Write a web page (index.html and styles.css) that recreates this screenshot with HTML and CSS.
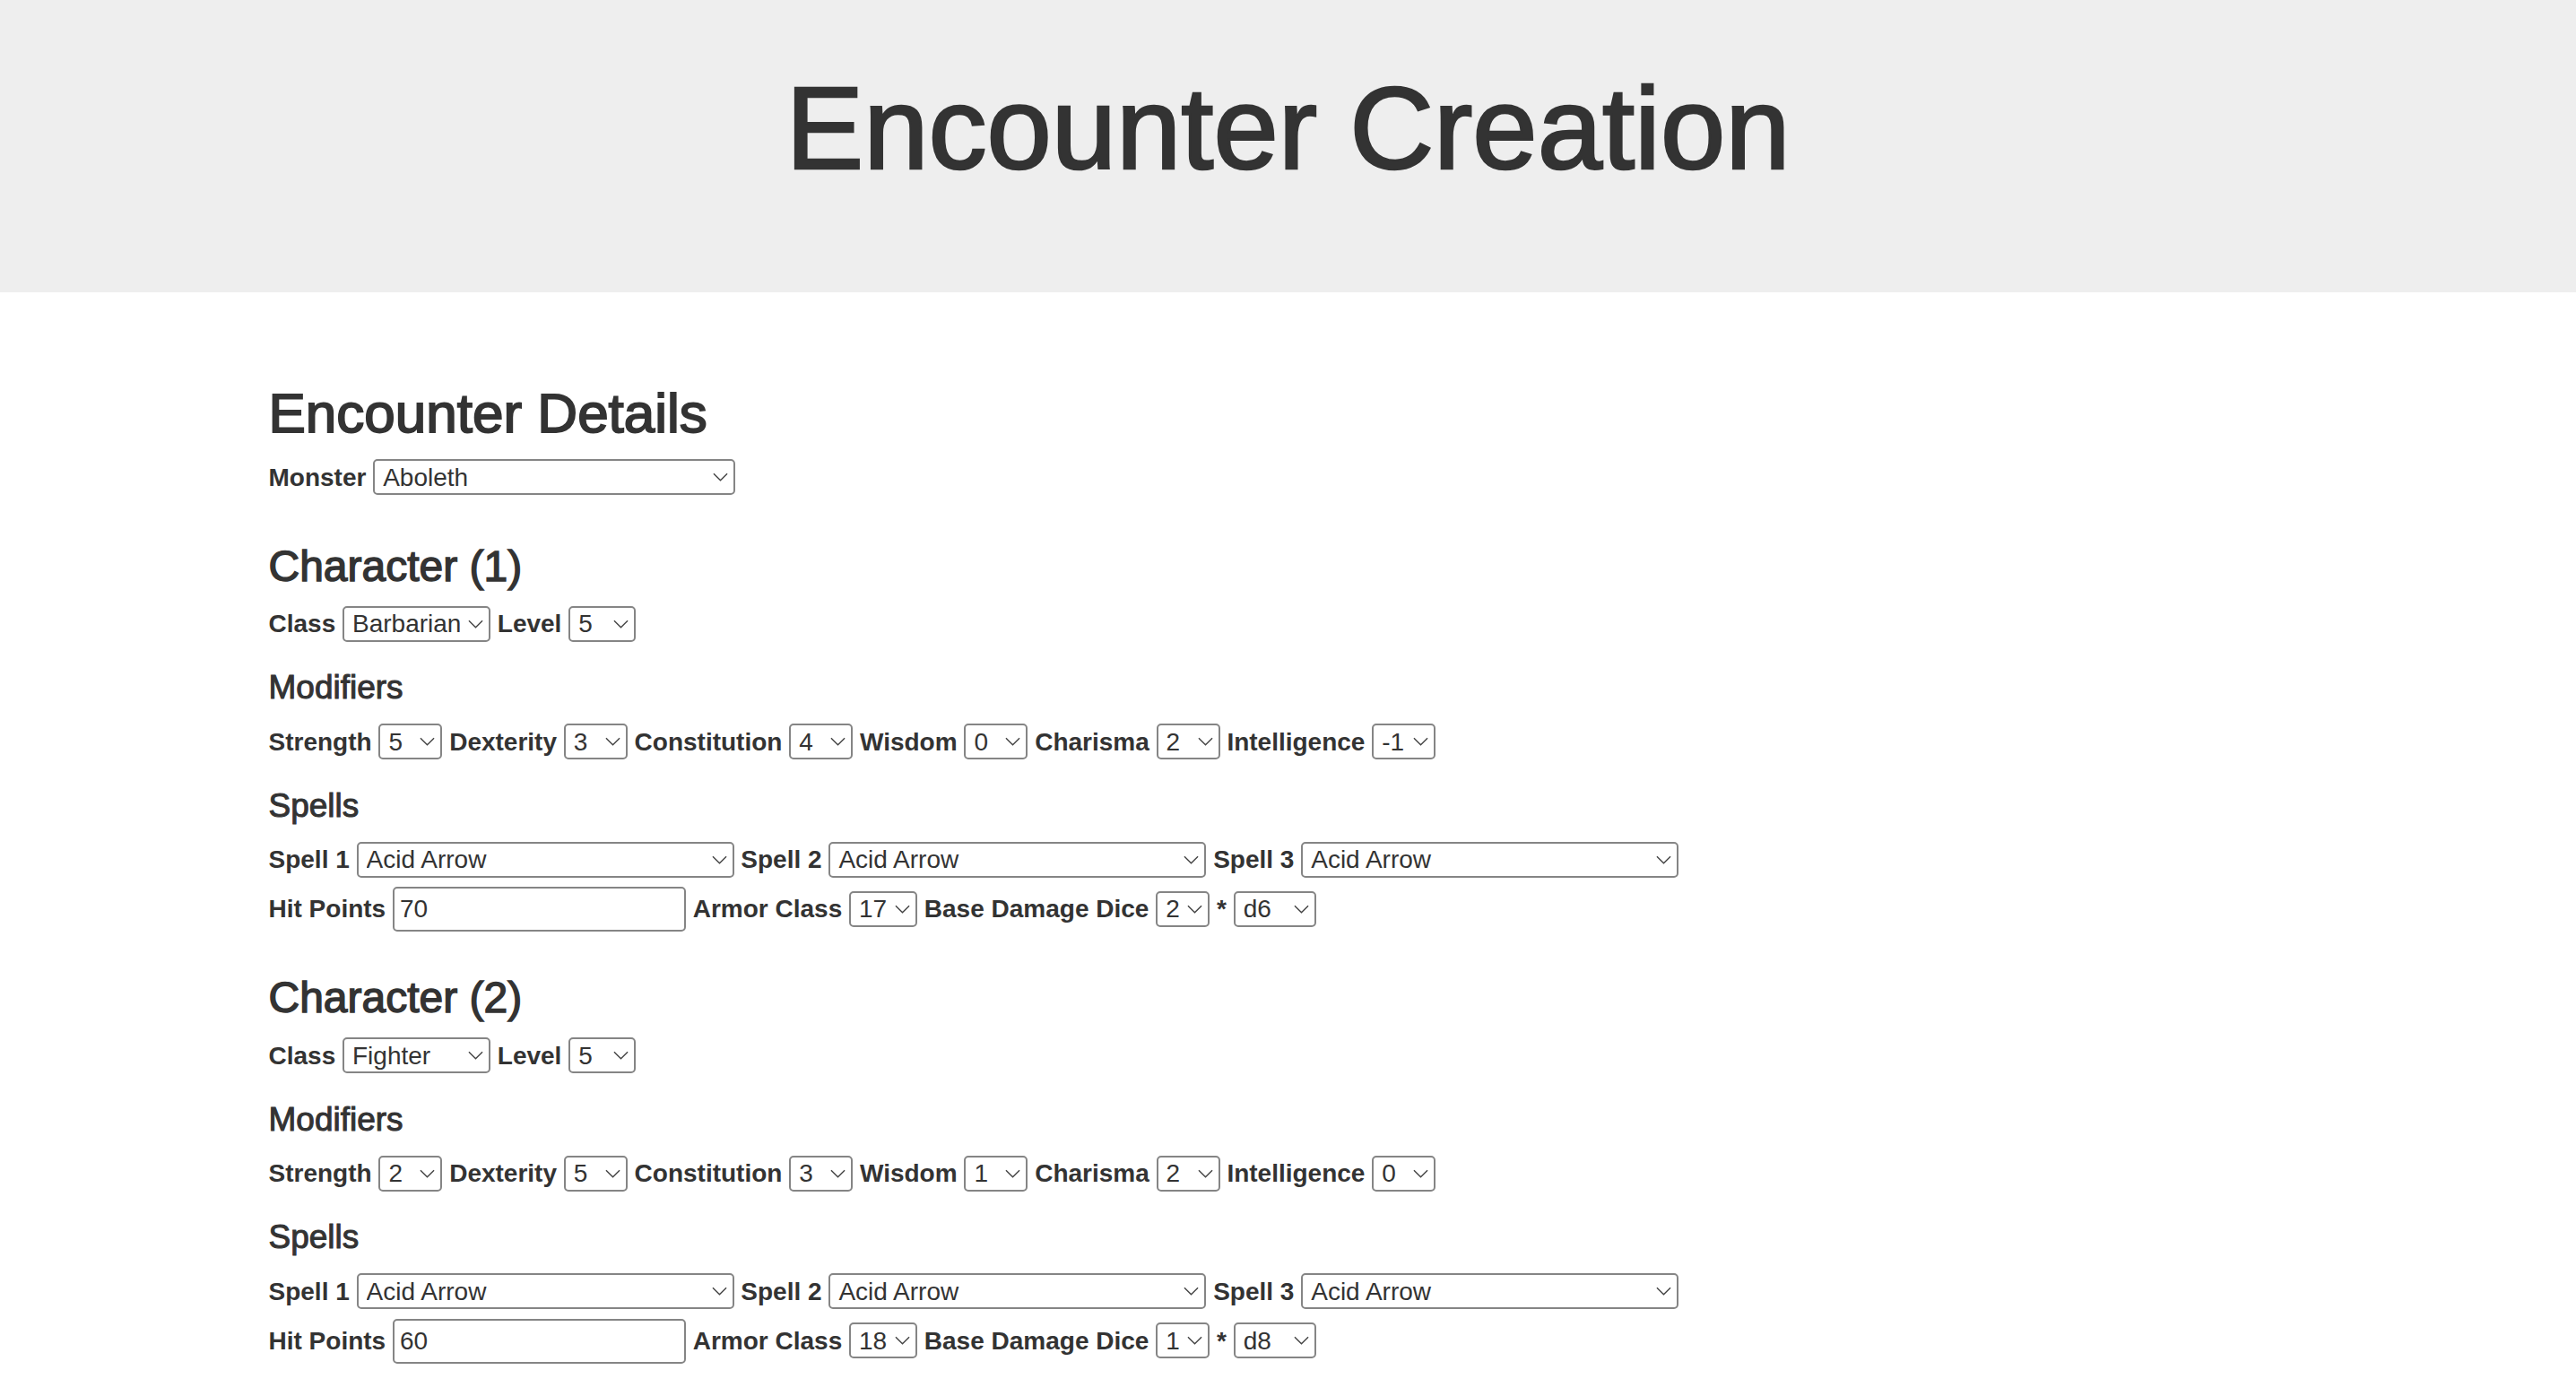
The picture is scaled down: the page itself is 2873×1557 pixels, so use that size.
FILE: index.html
```html
<!DOCTYPE html>
<html lang="en">
<head>
<meta charset="utf-8">
<title>Encounter Creation</title>
<link rel="stylesheet" href="styles.css">
</head>
<body>
<header class="jumbo">
  <h1 class="title">Encounter Creation</h1>
</header>
<main class="container">
  <section class="encounter">
    <h2 class="enc-title">Encounter Details</h2>
    <div class="row">
      <label class="lbl">Monster</label>
      <span class="sel"><select class="w-monster"><option selected>Aboleth</option><option>Adult Black Dragon</option><option>Beholder</option><option>Lich</option></select><svg class="chev" viewBox="0 0 18 10"><polyline points="1,1 9,9 17,1"/></svg></span>
    </div>
  </section>

  <section class="char">
    <h3 class="char-title">Character (1)</h3>
    <div class="row">
      <label class="lbl">Class</label>
      <span class="sel"><select class="w-class"><option selected>Barbarian</option><option>Bard</option><option>Cleric</option><option>Fighter</option><option>Wizard</option></select><svg class="chev" viewBox="0 0 18 10"><polyline points="1,1 9,9 17,1"/></svg></span>
      <label class="lbl">Level</label>
      <span class="sel"><select class="w-level"><option>1</option><option selected>5</option><option>10</option><option>20</option></select><svg class="chev" viewBox="0 0 18 10"><polyline points="1,1 9,9 17,1"/></svg></span>
    </div>
    <h4 class="sub-title">Modifiers</h4>
    <div class="row">
      <label class="lbl">Strength</label>
      <span class="sel"><select class="w-mod"><option>-1</option><option selected>5</option></select><svg class="chev" viewBox="0 0 18 10"><polyline points="1,1 9,9 17,1"/></svg></span>
      <label class="lbl">Dexterity</label>
      <span class="sel"><select class="w-mod"><option>-1</option><option selected>3</option></select><svg class="chev" viewBox="0 0 18 10"><polyline points="1,1 9,9 17,1"/></svg></span>
      <label class="lbl">Constitution</label>
      <span class="sel"><select class="w-mod"><option>-1</option><option selected>4</option></select><svg class="chev" viewBox="0 0 18 10"><polyline points="1,1 9,9 17,1"/></svg></span>
      <label class="lbl">Wisdom</label>
      <span class="sel"><select class="w-mod"><option>-1</option><option selected>0</option></select><svg class="chev" viewBox="0 0 18 10"><polyline points="1,1 9,9 17,1"/></svg></span>
      <label class="lbl">Charisma</label>
      <span class="sel"><select class="w-mod"><option>-1</option><option selected>2</option></select><svg class="chev" viewBox="0 0 18 10"><polyline points="1,1 9,9 17,1"/></svg></span>
      <label class="lbl">Intelligence</label>
      <span class="sel"><select class="w-mod"><option selected>-1</option><option>0</option></select><svg class="chev" viewBox="0 0 18 10"><polyline points="1,1 9,9 17,1"/></svg></span>
    </div>
    <h4 class="sub-title">Spells</h4>
    <div class="row">
      <label class="lbl">Spell 1</label>
      <span class="sel"><select class="w-spell"><option selected>Acid Arrow</option><option>Fireball</option></select><svg class="chev" viewBox="0 0 18 10"><polyline points="1,1 9,9 17,1"/></svg></span>
      <label class="lbl">Spell 2</label>
      <span class="sel"><select class="w-spell"><option selected>Acid Arrow</option><option>Fireball</option></select><svg class="chev" viewBox="0 0 18 10"><polyline points="1,1 9,9 17,1"/></svg></span>
      <label class="lbl">Spell 3</label>
      <span class="sel"><select class="w-spell"><option selected>Acid Arrow</option><option>Fireball</option></select><svg class="chev" viewBox="0 0 18 10"><polyline points="1,1 9,9 17,1"/></svg></span>
    </div>
    <div class="row">
      <label class="lbl">Hit Points</label>
      <input class="w-hp" type="text" value="70">
      <label class="lbl">Armor Class</label>
      <span class="sel"><select class="w-ac"><option>10</option><option selected>17</option></select><svg class="chev" viewBox="0 0 18 10"><polyline points="1,1 9,9 17,1"/></svg></span>
      <label class="lbl">Base Damage Dice</label>
      <span class="sel"><select class="w-dn"><option>1</option><option selected>2</option></select><svg class="chev" viewBox="0 0 18 10"><polyline points="1,1 9,9 17,1"/></svg></span>
      <span class="times">*</span>
      <span class="sel"><select class="w-dice"><option>d4</option><option selected>d6</option><option>d8</option><option>d12</option></select><svg class="chev" viewBox="0 0 18 10"><polyline points="1,1 9,9 17,1"/></svg></span>
    </div>
  </section>

  <section class="char">
    <h3 class="char-title">Character (2)</h3>
    <div class="row">
      <label class="lbl">Class</label>
      <span class="sel"><select class="w-class"><option>Barbarian</option><option selected>Fighter</option><option>Wizard</option></select><svg class="chev" viewBox="0 0 18 10"><polyline points="1,1 9,9 17,1"/></svg></span>
      <label class="lbl">Level</label>
      <span class="sel"><select class="w-level"><option>1</option><option selected>5</option><option>20</option></select><svg class="chev" viewBox="0 0 18 10"><polyline points="1,1 9,9 17,1"/></svg></span>
    </div>
    <h4 class="sub-title">Modifiers</h4>
    <div class="row">
      <label class="lbl">Strength</label>
      <span class="sel"><select class="w-mod"><option>-1</option><option selected>2</option></select><svg class="chev" viewBox="0 0 18 10"><polyline points="1,1 9,9 17,1"/></svg></span>
      <label class="lbl">Dexterity</label>
      <span class="sel"><select class="w-mod"><option>-1</option><option selected>5</option></select><svg class="chev" viewBox="0 0 18 10"><polyline points="1,1 9,9 17,1"/></svg></span>
      <label class="lbl">Constitution</label>
      <span class="sel"><select class="w-mod"><option>-1</option><option selected>3</option></select><svg class="chev" viewBox="0 0 18 10"><polyline points="1,1 9,9 17,1"/></svg></span>
      <label class="lbl">Wisdom</label>
      <span class="sel"><select class="w-mod"><option>-1</option><option selected>1</option></select><svg class="chev" viewBox="0 0 18 10"><polyline points="1,1 9,9 17,1"/></svg></span>
      <label class="lbl">Charisma</label>
      <span class="sel"><select class="w-mod"><option>-1</option><option selected>2</option></select><svg class="chev" viewBox="0 0 18 10"><polyline points="1,1 9,9 17,1"/></svg></span>
      <label class="lbl">Intelligence</label>
      <span class="sel"><select class="w-mod"><option>-1</option><option selected>0</option></select><svg class="chev" viewBox="0 0 18 10"><polyline points="1,1 9,9 17,1"/></svg></span>
    </div>
    <h4 class="sub-title">Spells</h4>
    <div class="row">
      <label class="lbl">Spell 1</label>
      <span class="sel"><select class="w-spell"><option selected>Acid Arrow</option><option>Fireball</option></select><svg class="chev" viewBox="0 0 18 10"><polyline points="1,1 9,9 17,1"/></svg></span>
      <label class="lbl">Spell 2</label>
      <span class="sel"><select class="w-spell"><option selected>Acid Arrow</option><option>Fireball</option></select><svg class="chev" viewBox="0 0 18 10"><polyline points="1,1 9,9 17,1"/></svg></span>
      <label class="lbl">Spell 3</label>
      <span class="sel"><select class="w-spell"><option selected>Acid Arrow</option><option>Fireball</option></select><svg class="chev" viewBox="0 0 18 10"><polyline points="1,1 9,9 17,1"/></svg></span>
    </div>
    <div class="row">
      <label class="lbl">Hit Points</label>
      <input class="w-hp" type="text" value="60">
      <label class="lbl">Armor Class</label>
      <span class="sel"><select class="w-ac"><option>10</option><option selected>18</option></select><svg class="chev" viewBox="0 0 18 10"><polyline points="1,1 9,9 17,1"/></svg></span>
      <label class="lbl">Base Damage Dice</label>
      <span class="sel"><select class="w-dn"><option selected>1</option><option>2</option></select><svg class="chev" viewBox="0 0 18 10"><polyline points="1,1 9,9 17,1"/></svg></span>
      <span class="times">*</span>
      <span class="sel"><select class="w-dice"><option>d4</option><option>d6</option><option selected>d8</option><option>d12</option></select><svg class="chev" viewBox="0 0 18 10"><polyline points="1,1 9,9 17,1"/></svg></span>
    </div>
  </section>
</main>
</body>
</html>
```

FILE: styles.css
```css
html, body {
  margin: 0;
  padding: 0;
  background: #fff;
}

body {
  font-family: "Liberation Sans", Arial, Helvetica, sans-serif;
  font-size: 28px;
  line-height: 40px;
  color: #333;
}

.jumbo {
  background: #eee;
  padding: 73px 0 112px;
  text-align: center;
}

.title {
  margin: 0;
  font-size: 130px;
  line-height: 141px;
  font-weight: 400;
  -webkit-text-stroke: 0.02em #333;
  color: #333;
}

.container {
  max-width: 2340px;
  margin: 0 auto;
  padding: 0 33px;
  box-sizing: border-box;
}

.enc-title {
  margin: 101px 0 17px;
  font-size: 62px;
  line-height: 68px;
  font-weight: 400;
  -webkit-text-stroke: 0.03em #333;
}

.char-title {
  margin: 42px 0 18px;
  font-size: 48px;
  line-height: 53px;
  font-weight: 400;
  -webkit-text-stroke: 0.03em #333;
}

.sub-title {
  margin: 20px 0 20px;
  font-size: 37px;
  line-height: 41px;
  font-weight: 400;
  -webkit-text-stroke: 0.028em #333;
}

.row {
  line-height: 40px;
  white-space: nowrap;
}

.lbl {
  display: inline-block;
  font-weight: 700;
  margin-bottom: 10px;
}

.times {
  font-weight: 700;
}

.sel {
  position: relative;
  display: inline-block;
}

select,
input {
  -webkit-appearance: none;
  appearance: none;
  box-sizing: border-box;
  margin: 0;
  font-family: inherit;
  font-size: 28px;
  line-height: normal;
  color: #333;
  background: #fff;
  border: 2px solid #858585;
  border-radius: 5px;
  outline: none;
  vertical-align: baseline;
}

select {
  height: 40px;
  padding: 0 0 0 9px;
}

input {
  height: 50px;
  padding: 0 6px;
}

.chev {
  position: absolute;
  right: 8px;
  top: 50%;
  width: 17px;
  height: 10px;
  margin-top: -5px;
  fill: none;
  stroke: #444;
  stroke-width: 1.5;
  pointer-events: none;
}

.w-monster { width: 404px; }
.w-class { width: 165px; }
.w-level { width: 75px; }
.w-mod { width: 71px; }
.w-spell { width: 421px; }
.w-hp { width: 327px; }
.w-ac { width: 76px; }
.w-dn { width: 60px; }
.w-dice { width: 92px; }
```
